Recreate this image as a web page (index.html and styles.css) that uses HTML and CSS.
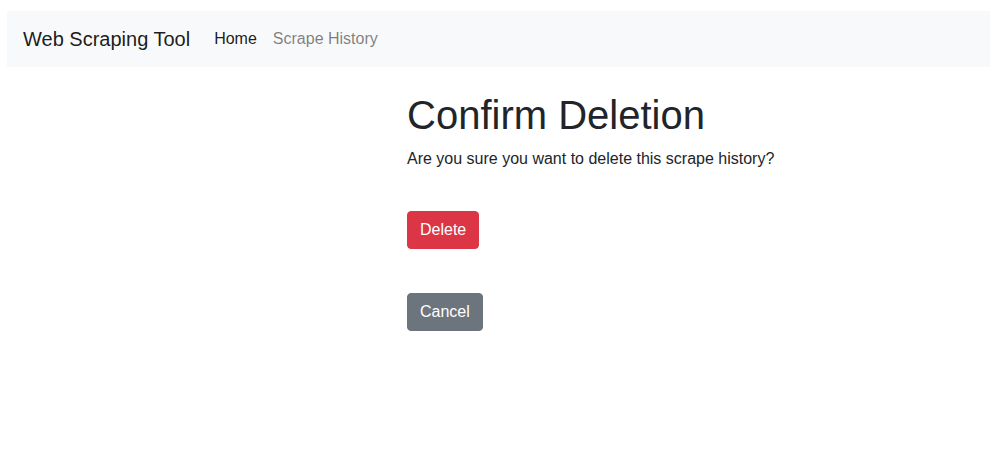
FILE: index.html
```html
<!DOCTYPE html>
<html lang="en">
<head>
<meta charset="utf-8">
<title>Confirm Deletion</title>
<link rel="stylesheet" href="styles.css">
</head>
<body>
<nav class="navbar">
  <a class="brand" href="#">Web Scraping Tool</a>
  <ul class="nav">
    <li><a class="nav-link active" href="#">Home</a></li>
    <li><a class="nav-link" href="#">Scrape History</a></li>
  </ul>
</nav>
<main class="content">
  <h1 class="title">Confirm Deletion</h1>
  <p class="message">Are you sure you want to delete this scrape history?</p>
  <form class="delete-form">
    <button type="button" class="btn btn-danger">Delete</button>
  </form>
  <a class="btn btn-secondary" href="#">Cancel</a>
</main>
</body>
</html>
```

FILE: styles.css
```css
* { box-sizing: border-box; }
html, body { height: 100%; }
body {
  margin: 11px 0 0 7px;
  font-family: "Liberation Sans", Arial, sans-serif;
  font-size: 16px;
  line-height: 1.5;
  color: #212529;
  background: #fff;
}
.navbar {
  display: flex;
  align-items: center;
  height: 56px;
  padding: 8px 16px;
  background: #f8f9fa;
}
.brand {
  font-size: 20px;
  line-height: 30px;
  margin-right: 16px;
  color: rgba(0,0,0,.9);
  text-decoration: none;
}
.nav {
  display: flex;
  list-style: none;
  margin: 0;
  padding: 0;
}
.nav-link {
  display: block;
  padding: 8px;
  color: rgba(0,0,0,.5);
  text-decoration: none;
}
.nav-link.active { color: rgba(0,0,0,.9); }
.content {
  padding-left: 400px;
  padding-top: 24px;
}
.title {
  margin: 0 0 8px;
  font-size: 40px;
  font-weight: 500;
  line-height: 1.2;
}
.message {
  margin: 0 0 40px;
}
.delete-form {
  margin: 0 0 44px;
}
.btn {
  display: inline-block;
  padding: 6px 12px;
  font-family: inherit;
  font-size: 16px;
  line-height: 1.5;
  border: 1px solid transparent;
  border-radius: 4px;
  color: #fff;
  text-decoration: none;
  cursor: pointer;
}
.btn-danger { background: #dc3545; border-color: #dc3545; }
.btn-secondary { background: #6c757d; border-color: #6c757d; }
```
